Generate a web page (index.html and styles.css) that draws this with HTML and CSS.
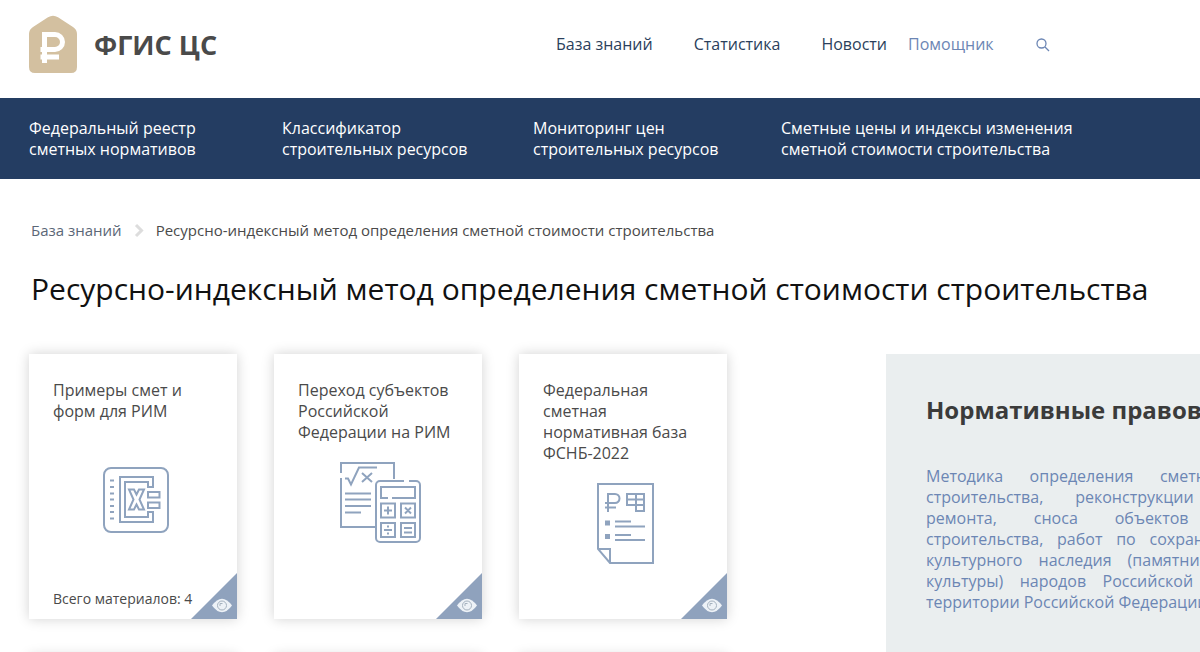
FILE: index.html
```html
<!DOCTYPE html>
<html lang="ru">
<head>
<meta charset="utf-8">
<meta name="viewport" content="width=device-width, initial-scale=1">
<title>ФГИС ЦС</title>
<link rel="stylesheet" href="styles.css">
</head>
<body>
<header class="header">
  <a class="brand" href="#">
    <svg class="brand-mark" viewBox="0 0 50 59" aria-hidden="true">
      <path d="M20 2.200Q25 -.8 30 2.200L45 12Q49 14.500 49 19V52Q49 58 43 58H7Q1 58 1 52V19Q1 14.500 5 12Z" fill="#d3c0a0"/>
      <path d="M16.500 48V19.500H27a7.500 7.500 0 0 1 0 15H12.500M12.500 42H31" fill="none" stroke="#fff" stroke-width="5"/>
    </svg>
    <span class="brand-name">ФГИС ЦС</span>
  </a>
  <nav class="topnav" aria-label="Основное меню">
    <a href="#">База знаний</a>
    <a href="#">Статистика</a>
    <a href="#">Новости</a>
    <a class="helper" href="#">Помощник</a>
  </nav>
  <button class="search" type="button" aria-label="Поиск">
    <svg viewBox="0 0 14 14" aria-hidden="true"><circle cx="5.500" cy="5.500" r="4.500"/><path d="M9 9l4 4"/></svg>
  </button>
</header>
<nav class="sections" aria-label="Разделы">
  <a href="#">Федеральный реестр<br>сметных нормативов</a>
  <a href="#">Классификатор<br>строительных ресурсов</a>
  <a href="#">Мониторинг цен<br>строительных ресурсов</a>
  <a href="#">Сметные цены и индексы изменения<br>сметной стоимости строительства</a>
</nav>
<main class="main">
  <nav class="crumbs" aria-label="Навигация">
    <a href="#">База знаний</a>
    <svg viewBox="0 0 10 15" aria-hidden="true"><path d="M2 2l5.500 5.500L2 13"/></svg>
    <span>Ресурсно-индексный метод определения сметной стоимости строительства</span>
  </nav>
  <h1 class="title">Ресурсно-индексный метод определения сметной стоимости строительства</h1>
  <div class="content">
    <div class="cards">
      <a class="card" href="#">
        <span class="card-title">Примеры смет и форм для РИМ</span>
        <svg class="card-icon" width="90" height="90" viewBox="-2 1 90 90" aria-hidden="true">
          <rect x="14" y="13" width="64" height="64" rx="7"/>
          <path d="M20 25.500h4M20 32h4M20 38.500h4M20 44.500h4M20 51h4M20 57h4M20 63.500h4" />
          <path d="M63 32V22H30V67H63V57H58V62H35V27H58V32ZM58 37H69.500V42.500H58ZM58 47.500H69.500V53H58Z"/>
          <path d="M39 34.500h5l2.500 5 2.500-5h5l-4.500 10 4.500 10h-5l-2.500-5-2.500 5h-5l4.500-10Z"/>
        </svg>
        <span class="card-count">Всего материалов: 4</span>
        <svg class="corner" viewBox="0 0 46 46" aria-hidden="true"><path class="fold" d="M46 0V46H0Z"/><path class="eye" d="M21 32.500Q31 19 41 32.500Q31 46 21 32.500Z"/><circle class="iris" cx="31" cy="32.500" r="4.500"/><path class="iris" d="M29 33v-2.500h2.500"/></svg>
      </a>
      <a class="card" href="#">
        <span class="card-title">Переход субъектов Российской Федерации на РИМ</span>
        <svg class="card-icon" width="90" height="90" viewBox="3 1 90 90" aria-hidden="true">
          <path d="M11 18V8H64V24M11 23V72H45M15 23.500h3l3 6 8-17H47M32 18l10 9M42 18l-10 9M15 38.500H41M15 44.500H41M15 51H41M15 57.500H31"/>
          <path d="M74 26H50a4 4 0 0 0-4 4V83a4 4 0 0 0 4 4H86a4 4 0 0 0 4-4V30a4 4 0 0 0-4-4H79"/>
          <path d="M58 43H51V32H85V43H62M51 48.500H65V62.500H51ZM71 48.500H85V62.500H71ZM51 68H65V82H51ZM71 68H85V82H71ZM54 55.500h8M58 51.500v8M75 52.500l6 6M81 52.500l-6 6M54 75h8M58 70.500v2M58 77.500v2M74 73h8M74 77.500h8"/>
        </svg>
        <svg class="corner" viewBox="0 0 46 46" aria-hidden="true"><path class="fold" d="M46 0V46H0Z"/><path class="eye" d="M21 32.500Q31 19 41 32.500Q31 46 21 32.500Z"/><circle class="iris" cx="31" cy="32.500" r="4.500"/><path class="iris" d="M29 33v-2.500h2.500"/></svg>
      </a>
      <a class="card" href="#">
        <span class="card-title">Федеральная сметная нормативная база ФСНБ-2022</span>
        <svg class="card-icon" width="90" height="104" viewBox="-7 -14 90 104" aria-hidden="true">
          <path d="M13 6H68V85H25L13 71ZM13 71H25V85M23 34V16H30a4.500 4.500 0 0 1 0 9H20M20 29.500H31M42 16H59V33H51V27H42ZM42 21.500H59M51 16V27H59"/>
          <path d="M30 43.500H46M30 48.500H60M30 57H46M30 62H60"/>
          <path class="solid" d="M20 42.500h5v5h-5ZM20 56h5v5h-5Z"/>
        </svg>
        <svg class="corner" viewBox="0 0 46 46" aria-hidden="true"><path class="fold" d="M46 0V46H0Z"/><path class="eye" d="M21 32.500Q31 19 41 32.500Q31 46 21 32.500Z"/><circle class="iris" cx="31" cy="32.500" r="4.500"/><path class="iris" d="M29 33v-2.500h2.500"/></svg>
      </a>
      <div class="card"></div>
      <div class="card"></div>
      <div class="card"></div>
    </div>
    <aside class="acts">
      <h2>Нормативные правовые акты</h2>
      <a href="#">Методика определения сметной стоимости строительства, реконструкции капитального ремонта, сноса объектов капитального строительства, работ по сохранению объектов культурного наследия (памятников истории и культуры) народов Российской Федерации на территории Российской Федерации</a>
    </aside>
  </div>
</main>
</body>
</html>
```

FILE: styles.css
```css
* { box-sizing: border-box; }
body {
  margin: 0;
  overflow-x: hidden;
  background: #fff;
  color: #4a4a4a;
  font: 16px/21px "Open Sans", "Noto Sans", sans-serif;
}
a { color: inherit; text-decoration: none; }
.header {
  display: flex;
  align-items: center;
  height: 98px;
  padding: 0 28px 9px;
}
.brand {
  display: flex;
  align-items: center;
  gap: 16px;
  width: 528px;
}
.brand-mark { width: 50px; height: 59px; }
.brand-name { font-size: 27px; line-height: 36px; font-weight: 700; color: #4a4a4a; }
.topnav { display: flex; gap: 41px; color: #2b3f5c; }
.topnav .helper { margin-left: -20px; color: #6c86b4; }
.search {
  display: flex;
  margin-left: 42px;
  padding: 0;
  border: 0;
  background: none;
}
.search svg { width: 14px; height: 14px; fill: none; stroke: #6c86b4; stroke-width: 1.3; }
.sections {
  display: grid;
  grid-template-columns: 253px 251px 248px auto;
  padding: 20px 29px 19px;
  background: #243d62;
  color: #fff;
}
.main { padding: 41px 28px 40px; }
.crumbs {
  display: flex;
  align-items: center;
  gap: 12px;
  padding: 0 3px;
  font-size: 15px;
}
.crumbs a { color: #5b6777; }
.crumbs svg { width: 10px; height: 15px; fill: none; stroke: #ddd; stroke-width: 3; }
.title {
  margin: 25px 3px 42px;
  color: #111;
  font-size: 30px;
  line-height: 46px;
  font-weight: 400;
  white-space: nowrap;
}
.content { display: flex; align-items: flex-start; gap: 159px; padding-left: 1px; }
.cards {
  flex: none;
  display: grid;
  grid-template-columns: repeat(3, 208px);
  gap: 37px;
}
.card {
  position: relative;
  display: flex;
  flex-direction: column;
  min-height: 265px;
  padding: 26px 24px 10px;
  background: #fff;
  box-shadow: 0 0 12px rgba(0, 0, 0, .18);
}
.card-title { min-height: 76px; }
.card-icon {
  align-self: center;
  fill: none;
  stroke: #8fa3be;
  stroke-width: 2;
}
.card-icon .solid { fill: #8fa3be; stroke: none; }
.card-count { margin-top: auto; font-size: 14px; }
.corner { position: absolute; right: 0; bottom: 0; width: 46px; height: 46px; }
.fold { fill: #8fa2bd; }
.eye { fill: #edf2f7; }
.iris { fill: none; stroke: #a5b2bf; }
.acts {
  flex: none;
  width: 488px;
  min-height: 340px;
  padding: 40px;
  background: #eaeeef;
}
.acts h2 {
  margin: 0 0 40px;
  color: #3b3b3b;
  font-size: 24px;
  line-height: 32px;
  font-weight: 700;
  white-space: nowrap;
}
.acts a { display: block; color: #6c86b4; text-align: justify; }
```
